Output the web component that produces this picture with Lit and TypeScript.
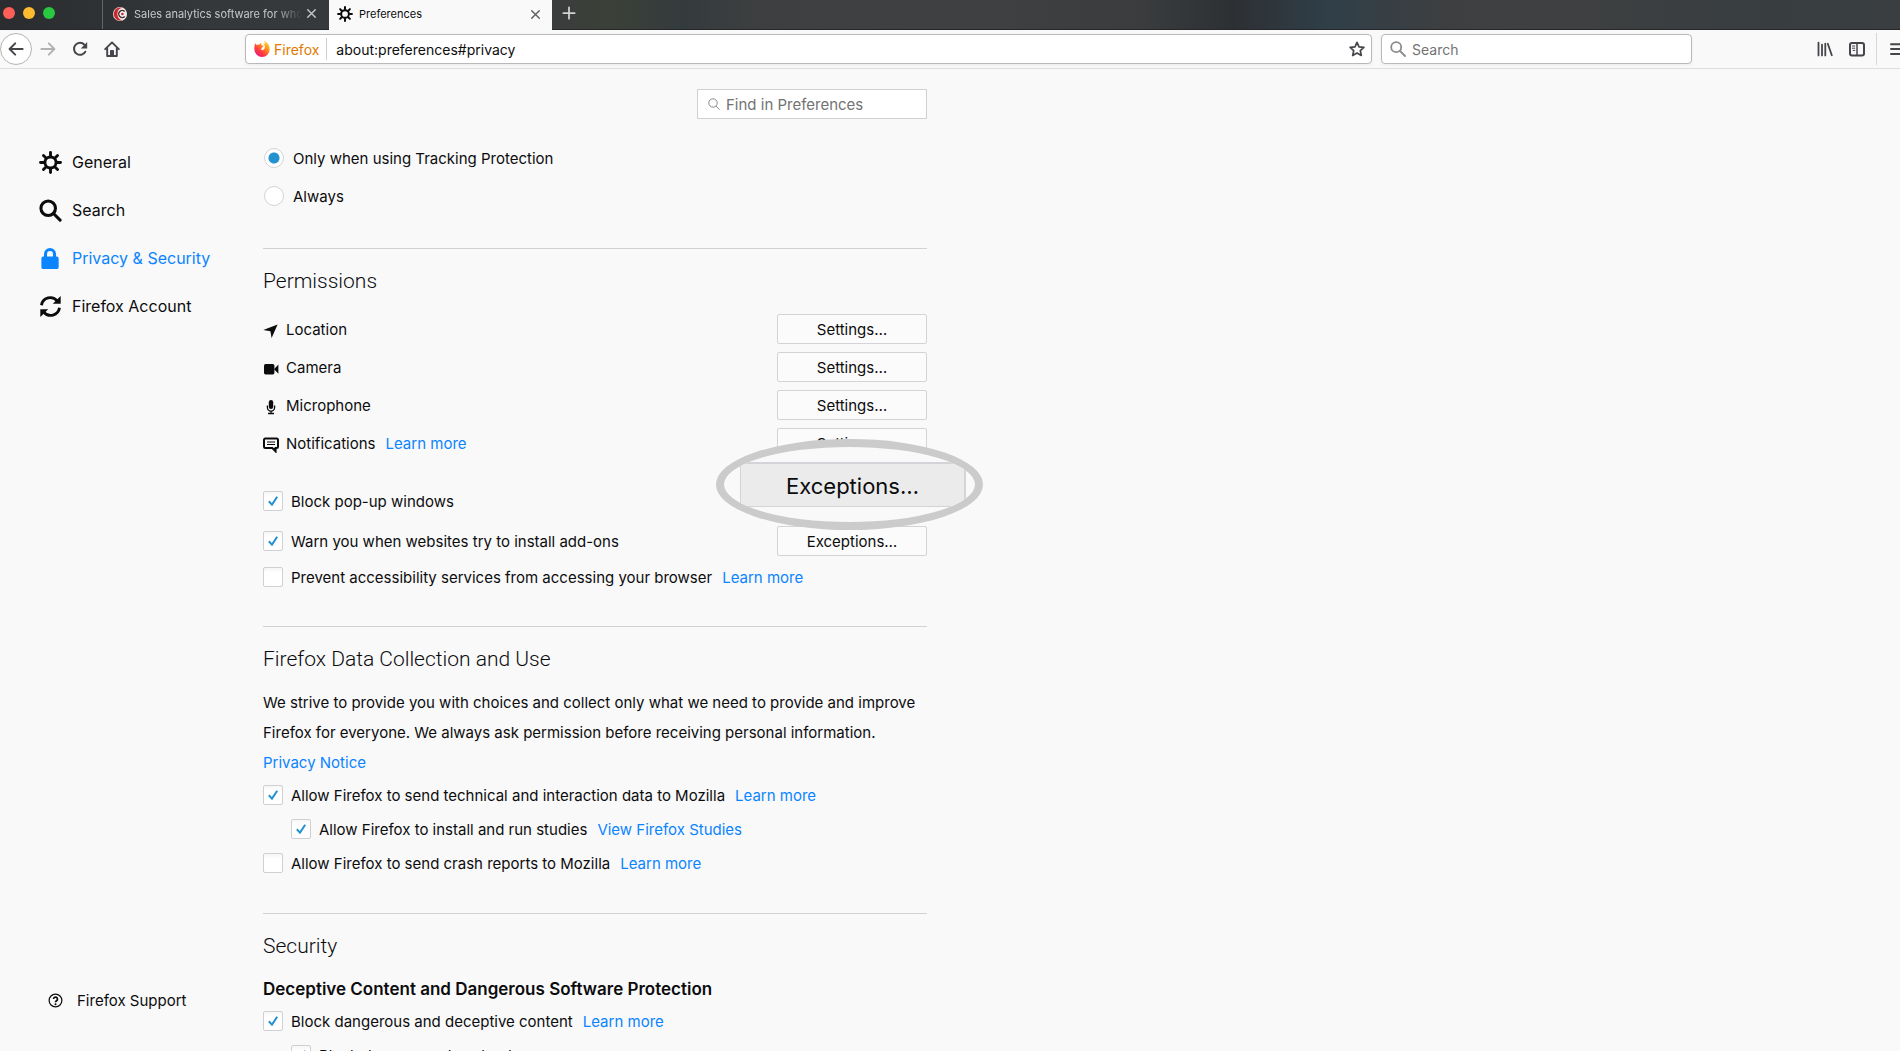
import { LitElement, html, css, svg, nothing, type TemplateResult } from "lit";
import { customElement, property } from "lit/decorators.js";

/* ---------- icons ---------- */

const gear = html`<svg viewBox="0 0 24 24" fill="none" stroke="currentColor" stroke-linecap="round">
  <circle cx="12" cy="12" r="5.8" stroke-width="3"></circle>
  ${[0, 45, 90, 135, 180, 225, 270, 315].map(
    (a) => svg`<path d="M12 1.6V5" stroke-width="3" transform="rotate(${a} 12 12)"></path>`
  )}
</svg>`;

const magnifier = html`<svg viewBox="0 0 24 24" fill="none" stroke="currentColor" stroke-width="3.2" stroke-linecap="round">
  <circle cx="9.6" cy="9.6" r="7.6"></circle><path d="M15.4 15.4l6.6 6.6"></path>
</svg>`;

const thinMagnifier = html`<svg viewBox="0 0 12 12" fill="none" stroke="currentColor" stroke-width="1">
  <circle cx="5" cy="5" r="4.2"></circle><path d="M8 8l3.6 3.6"></path>
</svg>`;

const magnifierLight = html`<svg viewBox="0 0 16 16" fill="none" stroke="currentColor" stroke-width="1.8" stroke-linecap="round">
  <circle cx="6.2" cy="6.2" r="5"></circle><path d="M10 10l5 5"></path>
</svg>`;

const lock = html`<svg viewBox="0 0 24 24" fill="currentColor">
  <path d="M5.2 10V7.4a6.3 6.3 0 0 1 12.6 0V10h.7a2 2 0 0 1 2 2v9a2 2 0 0 1-2 2h-14a2 2 0 0 1-2-2v-9a2 2 0 0 1 2-2zm3.2 0h6.2V7.3a3.1 3.1 0 0 0-6.2 0z"></path>
</svg>`;

const sync = html`<svg viewBox="0 0 24 24" fill="none" stroke="currentColor" stroke-width="3">
  <path d="M2.6 10.6A9.3 9.3 0 0 1 19 6.2"></path><path d="M21.4 13.4A9.3 9.3 0 0 1 5 17.8"></path>
  <path d="M22.6 1v8.2h-8.2z" fill="currentColor" stroke="none"></path>
  <path d="M1.4 23v-8.2h8.2z" fill="currentColor" stroke="none"></path>
</svg>`;

const help = html`<svg viewBox="0 0 16 16" fill="none" stroke="currentColor">
  <circle cx="8" cy="8" r="6.8" stroke-width="1.3"></circle>
  <path d="M5.9 6.5a2.1 2.1 0 1 1 3.3 1.7C8.4 8.700 8 8.900 8 9.900" stroke-width="1.8"></path>
  <circle cx="8" cy="12" r="1.1" fill="currentColor" stroke="none"></circle>
</svg>`;

const location = html`<svg viewBox="0 0 16 16" fill="currentColor"><path d="M14.6 1.5 8.600 15 7.400 8.300 .3 7z"></path></svg>`;
const camera = html`<svg viewBox="0 0 16 16" fill="currentColor">
  <rect x="1" y="3" width="10.4" height="10.4" rx="1.6"></rect><path d="M11 8.200 15.400 3.600v9.200z"></path>
</svg>`;
const microphone = html`<svg viewBox="0 0 16 16" fill="none" stroke="currentColor" stroke-width="1.3">
  <rect x="5.8" y="1" width="4.4" height="9" rx="2.2" fill="currentColor" stroke="none"></rect>
  <path d="M4.400 6.500v2a3.600 3.600 0 0 0 7.200 0v-2M8 12v2.300M5 14.500h6"></path>
</svg>`;
const notification = html`<svg viewBox="0 0 16 16" fill="none" stroke="currentColor">
  <path d="M2.200 1.500h11.600a1.200 1.200 0 0 1 1.200 1.200v7.100a1.200 1.200 0 0 1-1.200 1.200h-1.200v3.300L9.300 11H2.200A1.200 1.200 0 0 1 1 9.800V2.700a1.200 1.200 0 0 1 1.200-1.200z" stroke-width="2"></path>
  <path d="M9.200 11h3.600v4z" fill="currentColor" stroke="none"></path>
  <path d="M4 5h8M4 7.500h8" stroke-width="1.1"></path>
</svg>`;

const back = html`<svg viewBox="0 0 16 16" fill="none" stroke="currentColor" stroke-width="2" stroke-linecap="round" stroke-linejoin="round">
  <path d="M14.600 8H1.800M7.200 2.400 1.600 8l5.600 5.600"></path>
</svg>`;
const forward = html`<svg viewBox="0 0 16 16" fill="none" stroke="currentColor" stroke-width="2" stroke-linecap="round" stroke-linejoin="round">
  <path d="M1.400 8h12.800M8.800 2.400 14.400 8l-5.600 5.600"></path>
</svg>`;
const reload = html`<svg viewBox="0 0 16 16" fill="none" stroke="currentColor" stroke-width="2" stroke-linecap="round">
  <path d="M13.300 10.700A6 6 0 1 1 12.400 3.700"></path><path d="M15.200 1v6.400H8.800z" fill="currentColor" stroke="none"></path>
</svg>`;
const home = html`<svg viewBox="0 0 16 16" fill="none" stroke="currentColor" stroke-width="1.9" stroke-linecap="round" stroke-linejoin="round">
  <path d="M1.200 8.200 8 1.400l6.800 6.800M3.200 7.500V15h9.600V7.500"></path>
  <path d="M6.300 15V9.300h3.400V15z" fill="currentColor" stroke="none"></path>
  <path d="M6.600 14V9.600h2.800V14" stroke-width="1"></path>
</svg>`;
const star = html`<svg viewBox="0 0 16 16" fill="none" stroke="currentColor" stroke-width="1.7" stroke-linejoin="round">
  <path d="m8 1.300 2 4.500 4.900.5-3.600 3.300 1 4.900L8 12l-4.300 2.500 1-4.900L1.100 6.300 6 5.800z"></path>
</svg>`;
const library = html`<svg viewBox="0 0 16 16" fill="none" stroke="currentColor" stroke-width="1.8" stroke-linecap="round">
  <path d="M1.500 1.600v12.800M5 3.600v10.800M8.300 2.600v11.800M10.800 2.800l4 11.400"></path>
</svg>`;
const sidebar = html`<svg viewBox="0 0 16 16" fill="none" stroke="currentColor">
  <rect x="1" y="2" width="14" height="12.4" rx="2" stroke-width="2"></rect>
  <path d="M8 2v12" stroke-width="1.5"></path><path d="M3 5h3.200M3 7.200h3.200M3.800 9.400h2.400" stroke-width="1"></path>
</svg>`;
const menu = html`<svg viewBox="0 0 16 16" stroke="currentColor" stroke-width="2" stroke-linecap="round">
  <path d="M1 3.200h14M1 8h14M1 13h14"></path>
</svg>`;
const close = html`<svg viewBox="0 0 16 16" fill="none" stroke="currentColor" stroke-width="2" stroke-linecap="round">
  <path d="M2.500 2.500l11 11M13.500 2.500l-11 11"></path>
</svg>`;
const plus = html`<svg viewBox="0 0 16 16" fill="none" stroke="currentColor" stroke-width="2" stroke-linecap="round">
  <path d="M8 1.500v13M1.500 8h13"></path>
</svg>`;
const firefox = html`<svg viewBox="0 0 16 16">
  <defs><linearGradient id="flame" x1="1" y1="0" x2="0.2" y2="1">
    <stop offset="0" stop-color="#ffe226"></stop><stop offset=".35" stop-color="#ff9a1a"></stop>
    <stop offset=".7" stop-color="#ff3a3f"></stop><stop offset="1" stop-color="#e31587"></stop>
  </linearGradient></defs>
  <path fill="url(#flame)" d="M1.300 2.200 2.600 4c.9-.6 2-.7 2.700-.4C6 2.500 7 1.800 7.700 1.700 7 2.500 6.900 3.600 7.600 4.200c.7.4 1.800.2 2.200.6-.1.7-1.300 1.100-1.700 1.700.2 1-.7 1.300-1.500 1.400.7 1.300 2.500 1.400 3.500.3 1.300-1.500 1-4-.9-5.600 1-.1 1.900.4 2.400.9C11.400 2.300 10.800 1 9.500.2c3.900.6 6.300 4 6.200 8A7.600 7.600 0 0 1 .4 8.400C.3 5.900.6 3.700 1.300 2.200z"></path>
</svg>`;
const cresset = html`<svg viewBox="0 0 16 16">
  <circle cx="8" cy="8" r="7" fill="#f3eeee"></circle>
  <path d="M10.600 1.800A6.600 6.600 0 1 0 10.600 14.200 6.300 6.300 0 0 1 10.600 1.800z" fill="#c92a2f"></path>
  <path d="M12.700 5.500a3.500 3.500 0 1 0 0 5" fill="none" stroke="#4a2d33" stroke-width="1.5"></path>
  <circle cx="10.4" cy="8" r="1.3" fill="#c92a2f"></circle>
</svg>`;

/* ---------- browser chrome ---------- */

@customElement("browser-chrome")
export class BrowserChrome extends LitElement {
  static styles = css`
    :host { display: block; flex: none; }
    svg { display: block; width: 100%; height: 100%; }
    button { border: 0; padding: 0; background: none; font: inherit; color: inherit; }
    .icon { width: 16px; height: 16px; flex: none; }
    .tabs {
      display: flex; height: 30px; box-sizing: border-box; border-bottom: 1px solid #262729; color: #c6c8ca; font-size: 11px;
      background: linear-gradient(90deg, #2a2c2f 0, #34383b 11%, #3a3c3d 29%, #3b4038 32%, #343b3d 36%, #3e3f40 40%, #3f4041 52%, #3a3c3e 60%, #2d3033 65%, #303f49 70%, #3e3f40 76%, #3e4041 83%, #383d40 93%, #3a3e41 100%);
    }
    .lights { display: flex; gap: 8px; align-items: center; width: 102px; padding: 0 0 4px 3px; box-sizing: border-box; }
    .light { width: 12px; height: 12px; border-radius: 50%; }
    .red { background: #fc5f57; } .amber { background: #fdbc2f; } .green { background: #28c840; }
    .tab { display: flex; align-items: center; padding-bottom: 2px; box-sizing: border-box; }
    .tab.idle { width: 227px; border-left: 1px solid #63676a; padding-left: 9px; }
    .tab.active { width: 223px; margin-bottom: -1px; padding-left: 8px; background: #f9f9fa; color: #0c0c0d; }
    .tab .icon { margin-right: 6px; }
    .label { flex: 1; overflow: hidden; white-space: nowrap; }
    .idle .label { -webkit-mask-image: linear-gradient(90deg, #000 84%, transparent); mask-image: linear-gradient(90deg, #000 84%, transparent); }
    .x { width: 11px; height: 11px; margin: 0 11px 0 4px; }
    .idle .x { margin-right: 12px; }
    .active .x { color: #5a5a5c; }
    .new { width: 14px; height: 14px; margin: 6px 10px; color: #d0d2d3; }
    .toolbar { display: flex; align-items: center; height: 39px; box-sizing: border-box; border-bottom: 1px solid #dedee0; background: #f9f9fa; color: #45454a; overflow: hidden; }
    .tool { display: grid; place-items: center; width: 32px; height: 32px; flex: none; box-sizing: border-box; }
    .tool.back { border: 1px solid #b4b4b6; border-radius: 50%; background: #fff; }
    .tool.dim { color: #b2b2b4; }
    .space { flex: 1 1 117px; }
    .field { display: flex; align-items: center; height: 30px; box-sizing: border-box; border: 1px solid #b9b9bb; border-radius: 4px; background: #fff; box-shadow: 0 1px 3px rgba(0,0,0,.06); font-size: 14px; }
    .url { flex: 1 1 1127px; padding: 0 6px 0 8px; margin-right: 9px; }
    .search { flex: 1 1 311px; padding: 0 8px; color: #8b8b8d; }
    .brand { display: flex; align-items: center; gap: 4px; color: #e17900; padding-right: 7px; margin-right: 9px; border-right: 1px solid #cfcfd1; height: 22px; }
    input { flex: 1; min-width: 0; border: 0; padding: 0; outline: 0; background: none; font: inherit; color: #0c0c0d; }
    .search input { margin-left: 6px; }
    input::placeholder { color: #737373; opacity: 1; }
    .divider { width: 1px; height: 32px; margin: 0 0 0 3px; background: #d7d7db; flex: none; }
    .tool.menu { width: 23px; display: flex; align-items: center; padding-left: 13px; overflow: hidden; }
  `;

  render() {
    return html`
      <div class="tabs">
        <div class="lights"><span class="light red"></span><span class="light amber"></span><span class="light green"></span></div>
        <div class="tab idle">
          <span class="icon">${cresset}</span><span class="label">Sales analytics software for who</span>
          <button class="x" aria-label="Close tab">${close}</button>
        </div>
        <div class="tab active">
          <span class="icon">${gear}</span><span class="label">Preferences</span>
          <button class="x" aria-label="Close tab">${close}</button>
        </div>
        <button class="new" aria-label="New tab">${plus}</button>
      </div>
      <div class="toolbar">
        <button class="tool back" aria-label="Back"><span class="icon">${back}</span></button>
        <button class="tool dim" aria-label="Forward"><span class="icon">${forward}</span></button>
        <button class="tool" aria-label="Reload"><span class="icon">${reload}</span></button>
        <button class="tool" aria-label="Home"><span class="icon">${home}</span></button>
        <span class="space"></span>
        <div class="field url">
          <span class="brand"><span class="icon">${firefox}</span>Firefox</span>
          <input aria-label="Address" .value=${"about:preferences#privacy"} />
          <button class="icon" aria-label="Bookmark">${star}</button>
        </div>
        <div class="field search"><span class="icon">${magnifierLight}</span><input aria-label="Search" placeholder="Search" /></div>
        <span class="space"></span>
        <button class="tool" aria-label="Library"><span class="icon">${library}</span></button>
        <button class="tool" aria-label="Sidebars"><span class="icon">${sidebar}</span></button>
        <span class="divider"></span>
        <button class="tool menu" aria-label="Menu"><span class="icon">${menu}</span></button>
      </div>`;
  }
}

/* ---------- tick box row ---------- */

@customElement("check-row")
export class CheckRow extends LitElement {
  @property() label = "";
  @property() link = "";
  @property({ type: Boolean }) checked = false;

  static styles = css`
    :host { display: flex; align-items: center; white-space: nowrap; }
    input {
      appearance: none; width: 20px; height: 20px; margin: 0; box-sizing: border-box;
      border: 1px solid #d0d0d4; border-radius: 2px; background: linear-gradient(#f6f6f6, #fff 5px);
    }
    .box { display: grid; flex: none; margin-right: 8px; }
    .box > * { grid-area: 1 / 1; }
    svg { width: 20px; height: 20px; pointer-events: none; z-index: 1; }
    a { color: #0a84ff; text-decoration: none; margin-left: 10px; }
  `;

  render() {
    return html`
      <span class="box">
        <input id="box" type="checkbox" .checked=${this.checked} />
        ${this.checked
          ? html`<svg viewBox="0 0 20 20" fill="none" stroke="#2292d0" stroke-width="2"><path d="M5.800 10.200 9 13.600 14.200 5.800"></path></svg>`
          : nothing}
      </span>
      <label for="box">${this.label}</label>
      ${this.link ? html`<a href="#more">${this.link}</a>` : nothing}`;
  }
}

/* ---------- page ---------- */

interface Item { icon: TemplateResult; label: string; link?: string; }

const categories: Item[] = [
  { icon: gear, label: "General" },
  { icon: magnifier, label: "Search" },
  { icon: lock, label: "Privacy & Security" },
  { icon: sync, label: "Firefox Account" },
];

const permissions: Item[] = [
  { icon: location, label: "Location" },
  { icon: camera, label: "Camera" },
  { icon: microphone, label: "Microphone" },
  { icon: notification, label: "Notifications", link: "Learn more" },
];

@customElement("app-root")
export class AppRoot extends LitElement {
  static styles = css`
    :host {
      display: flex; flex-direction: column; height: 100vh; overflow: hidden;
      background: #f9f9fa; color: #0c0c0d; font-family: Inter, "Liberation Sans", sans-serif; font-size: 15px;
    }
    svg { display: block; width: 100%; height: 100%; }
    a { color: #0a84ff; text-decoration: none; }
    .page { flex: 1; min-height: 0; display: flex; }
    .side { width: 263px; flex: none; display: flex; flex-direction: column; justify-content: space-between; padding: 69px 0 27px 39px; box-sizing: border-box; }
    .nav { display: flex; flex-direction: column; }
    .cat { display: flex; align-items: center; gap: 10px; height: 48px; font-size: 16px; color: inherit; }
    .cat.on { color: #0a84ff; }
    .cat .glyph { width: 23px; height: 23px; }
    .support { display: flex; align-items: center; gap: 14px; height: 48px; padding-left: 9px; color: inherit; }
    .support .glyph { width: 15px; height: 15px; }
    .main { width: 664px; min-width: 0; padding-top: 20px; }
    .find { display: flex; align-items: center; gap: 6px; width: 230px; height: 30px; box-sizing: border-box; margin: 0 0 20px auto; padding: 0 10px; border: 1px solid #d0d0d3; background: #fff; color: #8b8b8d; }
    .find .glyph { width: 12px; height: 12px; flex: none; }
    .find input { flex: 1; min-width: 0; border: 0; padding: 0; outline: 0; background: none; font: inherit; }
    .find input::placeholder { color: #737373; opacity: 1; }
    .radio { display: flex; align-items: center; gap: 9px; height: 38px; }
    .radio input { appearance: none; width: 20px; height: 20px; margin: 0 0 0 1px; box-sizing: border-box; border: 1px solid #d4d4d7; border-radius: 50%; background: #fff; }
    .radio input:checked { background: radial-gradient(circle, #2292d0 5px, #fff 6px); }
    section { border-top: 1px solid #d2d2d4; margin-top: 33px; padding-top: 17px; }
    h2 { margin: 0 0 14px; font-family: Roboto, Inter, sans-serif; font-size: 21px; line-height: 30px; font-weight: 300; }
    h3 { margin: 0; font-size: 17px; line-height: 29px; font-weight: 600; }
    p { margin: 0; line-height: 30px; }
    .row { display: flex; align-items: center; height: 38px; }
    .row .glyph { width: 16px; height: 16px; margin: 3px 7px 0 0; }
    .row a { margin-left: 10px; }
    .push { margin-left: auto; }
    .action { width: 150px; height: 30px; box-sizing: border-box; padding: 0; border: 1px solid #d3d3d8; border-radius: 2px; background: #fbfbfb; font: inherit; color: inherit; }
    .blocks { margin-top: 19px; }
    .wide { height: 40px; }
    check-row { height: 34px; }
    .wide check-row { height: 40px; }
    .last { height: 32px; }
    .indent { padding-left: 28px; }
    .spot { position: relative; width: 150px; height: 30px; }
    .lens {
      position: absolute; left: -61px; top: -47px; width: 267px; height: 91px; box-sizing: border-box;
      border: 8px solid #cbcbcb; border-radius: 50%; background: #f9f9fa; overflow: hidden;
      display: flex; align-items: center; justify-content: center; padding-left: 7px;
    }
    .zoomed { flex: none; width: 226px; height: 45px; box-sizing: border-box; padding: 2px 0 0; border: 1px solid #d3d3d8; border-top-width: 2px; border-right-width: 2px; background: #ebebeb; font: inherit; font-size: 22px; color: inherit; }
  `;

  render() {
    return html`
      <browser-chrome></browser-chrome>
      <div class="page">
        <aside class="side">
          <nav class="nav">
            ${categories.map(
              (c) => html`<a class="cat ${c.label.startsWith("Privacy") ? "on" : ""}" href="#category"><span class="glyph">${c.icon}</span>${c.label}</a>`
            )}
          </nav>
          <a class="support" href="#support"><span class="glyph">${help}</span>Firefox Support</a>
        </aside>
        <main class="main">
          <div class="find"><span class="glyph">${thinMagnifier}</span><input aria-label="Find in Preferences" placeholder="Find in Preferences" /></div>
          <label class="radio"><input type="radio" name="tracking" checked />Only when using Tracking Protection</label>
          <label class="radio"><input type="radio" name="tracking" />Always</label>

          <section>
            <h2>Permissions</h2>
            ${permissions.map(
              (p) => html`<div class="row"><span class="glyph">${p.icon}</span><span>${p.label}</span>${p.link ? html`<a href="#more">${p.link}</a>` : nothing}<button class="action push">Settings…</button></div>`
            )}
            <div class="blocks">
              <div class="row wide">
                <check-row label="Block pop-up windows" checked></check-row>
                <div class="spot push"><div class="lens"><button class="zoomed">Exceptions…</button></div></div>
              </div>
              <div class="row wide">
                <check-row label="Warn you when websites try to install add-ons" checked></check-row>
                <button class="action push">Exceptions…</button>
              </div>
              <check-row class="last" label="Prevent accessibility services from accessing your browser" link="Learn more"></check-row>
            </div>
          </section>

          <section>
            <h2>Firefox Data Collection and Use</h2>
            <p>We strive to provide you with choices and collect only what we need to provide and improve Firefox for everyone. We always ask permission before receiving personal information.</p>
            <p><a href="#notice">Privacy Notice</a></p>
            <check-row label="Allow Firefox to send technical and interaction data to Mozilla" link="Learn more" checked></check-row>
            <check-row class="indent" label="Allow Firefox to install and run studies" link="View Firefox Studies" checked></check-row>
            <check-row label="Allow Firefox to send crash reports to Mozilla" link="Learn more"></check-row>
          </section>

          <section>
            <h2>Security</h2>
            <h3>Deceptive Content and Dangerous Software Protection</h3>
            <check-row label="Block dangerous and deceptive content" link="Learn more" checked></check-row>
            <check-row class="indent" label="Block dangerous downloads" checked></check-row>
          </section>
        </main>
      </div>`;
  }
}
